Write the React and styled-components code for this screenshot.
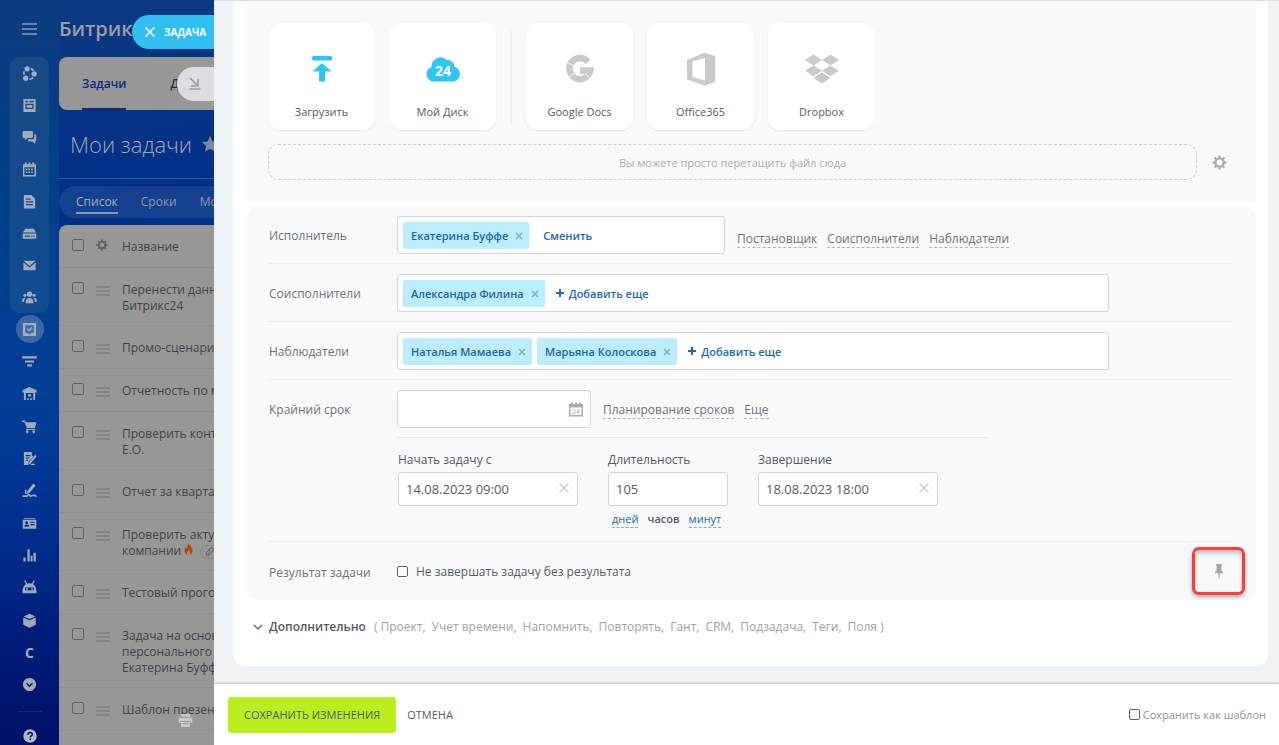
import React from "react";
import styled, { createGlobalStyle, css } from "styled-components";
import { FaDropbox } from "react-icons/fa";

const GlobalStyle = createGlobalStyle`
  * { box-sizing: border-box; }
  body {
    margin: 0;
    font-family: "Open Sans", "Noto Sans", sans-serif;
    font-size: 12px;
    color: #535c69;
  }
  button, input { font: inherit; color: inherit; }
  button { background: none; border: 0; padding: 0; cursor: pointer; }
  a { color: inherit; text-decoration: none; }
  h1 { margin: 0; }
  svg { flex: none; }
`;

const Layout = styled.div`
  display: flex;
  height: 100vh;
  overflow: hidden;
  background: linear-gradient(168deg, #0c3a80 0%, #00308a 22%, #003c90 45%, #003594 66%, #001f7e 84%, #000f66 100%);
`;

/* ---------- left menu ---------- */
const Sidebar = styled.nav`
  flex: 0 0 59px;
  display: flex;
  flex-direction: column;
  align-items: center;
  color: #a3abbb;
  background: linear-gradient(180deg, #0c3c80 0%, #00408c 34%, #003f97 54%, #003394 67%, #001f7d 84%, #000f68 100%);
`;
const Burger = styled.button`
  height: 57px;
  width: 39px;
  color: #8d9bb4;
  display: grid;
  place-items: center;
`;
const MenuGroup = styled.div`
  width: 39px;
  border-radius: 10px;
  background: rgba(130, 160, 170, 0.13);
`;
const MenuList = styled.div`
  flex: 1;
  display: flex;
  flex-direction: column;
  justify-content: space-between;
`;
const MenuItem = styled.a`
  display: grid;
  place-items: center;
  width: 39px;
  height: 32px;
  font-size: 14px;
  font-weight: 700;
`;
const ActiveDot = styled.span`
  display: grid;
  place-items: center;
  width: 28px;
  height: 28px;
  border-radius: 50%;
  background: #3a67a8;
`;
const MenuFooter = styled.div`
  flex: 0 0 44px;
  display: flex;
  flex-direction: column;
  align-items: center;
  justify-content: space-between;
  padding-top: 10px;
`;
const MenuLine = styled.span`
  width: 24px;
  height: 1px;
  background: rgba(255, 255, 255, 0.08);
`;

/* ---------- dimmed page under the slider ---------- */
const Page = styled.div`
  flex: 0 0 155px;
  position: relative;
  display: flex;
  flex-direction: column;
  overflow: hidden;
  white-space: nowrap;
  color: #999da3;
`;
const Brand = styled.div`
  height: 57px;
  line-height: 57px;
  font-size: 20px;
  font-weight: 600;
`;
const Tabs = styled.div`
  flex: 0 0 53px;
  display: flex;
  gap: 44px;
  padding: 0 23px;
  border-radius: 8px 0 0 8px;
  background: #979797;
`;
const Tab = styled.a`
  line-height: 53px;
  font-weight: 600;
  color: ${({ $active }) => ($active ? "#0b2a7a" : "#30343a")};
  box-shadow: ${({ $active }) => ($active ? "inset 0 -2px 0 #0b2a7a" : "none")};
`;
const TitleRow = styled.div`
  flex: 0 0 69px;
  display: flex;
  align-items: center;
  gap: 9px;
  padding-left: 11px;
  border-bottom: 1px solid #2b549a;
  h1 {
    font-size: 22px;
    font-weight: 300;
    color: #a2a6ad;
  }
`;
const Filters = styled.div`
  flex: 0 0 32px;
  display: flex;
  align-items: center;
  gap: 23px;
  margin: 7px 0;
  padding-left: 17px;
  border-radius: 16px 0 0 16px;
  background: rgba(120, 150, 170, 0.17);
`;
const Filter = styled.a`
  margin-top: 2px;
  line-height: 20px;
  color: ${({ $active }) => ($active ? "#a6abb3" : "#8b98ae")};
  border-bottom: 2px solid ${({ $active }) => ($active ? "#8b98ae" : "transparent")};
`;
const TaskTable = styled.table`
  width: 400px;
  border-spacing: 0;
  table-layout: fixed;
  border-radius: 8px 0 0 0;
  background: #979797;
  color: #3f444b;
  text-align: left;
  line-height: 16px;
  th, td {
    height: 43px;
    vertical-align: top;
    padding: 14px 0 11px;
    border-bottom: 1px solid #8e8f90;
    font-weight: 400;
  }
`;
const CheckCell = styled.td`
  width: 37px;
  padding-left: 13px !important;
`;
const HandleCell = styled.td`
  width: 26px;
`;
const Check = styled.input`
  appearance: none;
  display: block;
  flex: none;
  width: ${({ $size }) => $size || 12}px;
  height: ${({ $size }) => $size || 12}px;
  margin: 0;
  border: 1px solid #5c6067;
  border-radius: 2px;
  background: ${({ $white }) => ($white ? "#fff" : "transparent")};
`;
const Drag = styled.span`
  display: block;
  width: 14px;
  height: 10px;
  margin-top: 4px;
  background: repeating-linear-gradient(#818488 0 2px, transparent 2px 4px);
`;
const ClipBadge = styled.span`
  display: inline-flex;
  align-items: center;
  width: 40px;
  height: 14px;
  margin-left: 4px;
  padding-left: 4px;
  border: 1px solid #85878a;
  border-radius: 7px;
  vertical-align: middle;
`;
const SliderLabel = styled.button`
  position: absolute;
  right: 0;
  top: 15px;
  display: flex;
  align-items: center;
  gap: 8px;
  width: 82px;
  height: 34px;
  padding-left: 12px;
  border-radius: 17px 0 0 17px;
  background: #2fbff0;
  color: #fff;
  font-size: 10px;
  font-weight: 700;
`;
const SliderMinimize = styled.button`
  position: absolute;
  right: 0;
  top: 67px;
  width: 37px;
  height: 34px;
  padding: 3px 0 0 12px;
  border-radius: 17px 0 0 17px;
  background: #dadee2;
  text-align: left;
`;
const PrintButton = styled.button`
  position: absolute;
  left: 119px;
  bottom: 13px;
  color: #c9c9c9;
`;

/* ---------- slider ---------- */
const Slider = styled.main`
  flex: 1;
  min-width: 0;
  display: flex;
  flex-direction: column;
  background: #eef2f4;
`;
const Content = styled.div`
  flex: 1;
  min-height: 0;
  overflow: hidden;
  padding: 0 11px 0 19px;
  border-top: 1px solid #dcdfe3;
`;
const Card = styled.div`
  padding: 0 12px 30px 14px;
  border-radius: 0 0 12px 12px;
  background: #fff;
`;
const FilesSection = styled.section`
  padding: 22px 21px 21px;
  background: #f8f9fb;
`;
const FileCards = styled.div`
  display: flex;
  gap: 14px;
`;
const FileCard = styled.button`
  display: flex;
  flex-direction: column;
  align-items: center;
  width: 107px;
  height: 107px;
  border-radius: 12px;
  background: #fff;
  box-shadow: 0 1px 2px rgba(83, 92, 105, 0.12);
  font-size: 11px;
  color: #535c69;
  svg {
    margin: 29px 0 18px;
  }
`;
const CardsDivider = styled.span`
  width: 2px;
  margin: 8px 0 6px;
  background: #eceef1;
`;
const DropRow = styled.div`
  display: flex;
  align-items: center;
  gap: 15px;
  margin-top: 14px;
`;
const DropZone = styled.div`
  flex: 1;
  height: 36px;
  line-height: 36px;
  border: 1px dashed #ccd1d6;
  border-radius: 10px;
  text-align: center;
  font-size: 11px;
  color: #a8adb4;
`;
const GearButton = styled.button`
  display: grid;
  width: 15px;
  margin-right: 8px;
`;
const Options = styled.section`
  margin-top: 5px;
  padding: 0 23px 0 21px;
  border-radius: 10px;
  background: #f8f9fb;
`;
const Row = styled.div`
  display: flex;
  align-items: ${({ $top }) => ($top ? "flex-start" : "center")};
  padding: 10px 0 9px;
  border-bottom: ${({ $last }) => ($last ? "0" : "1px solid #eceff2")};
  min-height: 58px;
`;
const RowLabel = styled.span`
  flex: 0 0 129px;
  padding-left: 1px;
  line-height: 40px;
  margin-bottom: -2px;
  color: #6c737d;
`;
const boxStyle = css`
  border: 1px solid #d0d6dc;
  border-radius: 3px;
  background: #fff;
`;
const TokenField = styled.div`
  ${boxStyle}
  display: flex;
  align-items: center;
  gap: 5px;
  height: 38px;
  padding: 0 5px;
  flex: 0 1 ${({ $wide }) => ($wide ? "712px" : "328px")};
`;
const Token = styled.span`
  display: flex;
  align-items: center;
  gap: 7px;
  height: 27px;
  padding: 0 6px 0 8px;
  border-radius: 2px;
  background: #bcedfc;
  font-size: 11px;
  font-weight: 600;
  color: #2067b0;
`;
const TokenAction = styled.button`
  margin-left: ${({ $plain }) => ($plain ? "9px" : "6px")};
  display: flex;
  align-items: center;
  gap: 5px;
  font-size: 11px;
  font-weight: 600;
  color: #2067b0;
`;
const Links = styled.div`
  display: flex;
  gap: 10px;
  padding: ${({ $low }) => ($low ? "8px 0 0 12px" : "2px 0 0 12px")};
`;
const DashLink = styled.a`
  line-height: 17px;
  color: #6c737d;
  border-bottom: 1px dashed #b0b5bd;
`;
const DeadlineBody = styled.div`
  flex: 1;
`;
const DeadlineLine = styled.div`
  display: flex;
  align-items: center;
`;
const Control = styled.div`
  ${boxStyle}
  display: flex;
  align-items: center;
  width: ${({ $w }) => $w}px;
  height: ${({ $h }) => $h || 34}px;
  padding-right: 7px;
  input {
    flex: 1;
    min-width: 0;
    height: 100%;
    padding: 0 0 0 7px;
    border: 0;
    outline: 0;
    background: none;
    font-size: 13px;
  }
`;
const Plan = styled.div`
  display: flex;
  gap: 30px;
  max-width: 591px;
  margin: 9px 0 4px;
  padding: 14px 0 0 1px;
  border-top: 1px solid #e9ecef;
`;
const PlanField = styled.div`
  display: flex;
  flex-direction: column;
  > label:first-child {
    line-height: 16px;
    margin-bottom: 4px;
  }
`;
const Units = styled.div`
  display: flex;
  gap: 9px;
  padding: 5px 0 0 4px;
  font-size: 11px;
`;
const Unit = styled.button`
  line-height: 16px;
  font-weight: ${({ $active }) => ($active ? 600 : 400)};
  color: ${({ $active }) => ($active ? "#535c69" : "#2067b0")};
  border-bottom: 1px dashed ${({ $active }) => ($active ? "transparent" : "#7fa8d6")};
`;
const CheckLabel = styled.label`
  display: flex;
  align-items: center;
  gap: 8px;
`;
const PinButton = styled.button`
  display: grid;
  place-items: center;
  width: 53px;
  height: 48px;
  margin: -8px -12px -6px auto;
  border: 3px solid #f53f3f;
  border-radius: 7px;
  box-shadow: 0 2px 4px rgba(0, 0, 0, 0.35), inset 0 3px 4px rgba(0, 0, 0, 0.25);
`;
const More = styled.div`
  display: flex;
  align-items: center;
  gap: 8px;
  padding: 18px 0 0 6px;
  line-height: 18px;
`;
const MoreButton = styled.button`
  display: flex;
  align-items: center;
  gap: 6px;
  font-weight: 600;
`;
const MoreList = styled.span`
  display: flex;
  gap: 6px;
  color: #9da2aa;
`;
const Footer = styled.footer`
  flex: 0 0 61px;
  display: flex;
  align-items: center;
  gap: 11px;
  padding: 0 13px 0 14px;
  background: #fff;
  box-shadow: 0 -1px 2px rgba(0, 0, 0, 0.2);
  font-size: 11px;
`;
const SaveButton = styled.button`
  height: 36px;
  padding: 0 16px;
  border-radius: 3px;
  background: #bbed21;
  font-weight: 500;
`;
const CancelButton = styled.button`
  font-weight: 500;
`;
const TemplateLabel = styled.label`
  display: flex;
  align-items: center;
  gap: 3px;
  margin-left: auto;
  color: #8d939b;
`;

/* ---------- icons ---------- */
const Svg = ({ size = 15, children }) => (
  <svg width={size} height={size} viewBox="0 0 16 16" fill="currentColor" aria-hidden="true">
    {children}
  </svg>
);
const line = { fill: "none", stroke: "currentColor" };

const Cross = ({ size = 8, color = "#8db4c6", width = 2 }) => (
  <svg width={size} height={size} viewBox="0 0 8 8" aria-hidden="true">
    <path d="M1 1l6 6M7 1L1 7" fill="none" stroke={color} strokeWidth={width} />
  </svg>
);
const Gear = ({ size = 15, color = "#a8adb4" }) => (
  <svg width={size} height={size} viewBox="0 0 16 16" fill="none" stroke={color} aria-hidden="true">
    <circle cx="8" cy="8" r="4.4" strokeWidth="2.600" />
    <path d="M8 .5v3M8 12.500v3M.5 8h3M12.500 8h3M2.700 2.700l2 2M11.300 11.300l2 2M13.300 2.700l-2 2M4.700 11.300l-2 2" strokeWidth="2.400" />
  </svg>
);

const icons = {
  network: (
    <>
      <circle cx="5.500" cy="3" r="2.800" />
      <circle cx="13" cy="8.500" r="2.800" />
      <circle cx="4" cy="13" r="2.800" />
      <path {...line} strokeWidth="1.800" d="M9.500 2.800c1.300.4 2.200 1.100 2.900 2.200M12 12.500c-1 1-2.500 1.600-4.200 1.600M2.200 9.200c-.5-1.400-.3-2.400.3-3.500" />
    </>
  ),
  feed: <path fillRule="evenodd" d="M1.500 1h13v14h-13zM3.600 3v1.500h3V3zM8 3v1.500h4.400V3zM3.600 6.200v5.600h8.800V6.200zM5 7.500h6v3H5z" />,
  chat: <path d="M1.800 1h8.700a1.200 1.200 0 0 1 1.200 1.200v5a1.200 1.200 0 0 1-1.200 1.200H6L3 11V8.400H1.800A1.200 1.200 0 0 1 .6 7.200v-5A1.200 1.200 0 0 1 1.800 1zM13 4.500h1a1.200 1.200 0 0 1 1.200 1.200v5.200a1.200 1.200 0 0 1-1.200 1.200V15l-3-2.800H7.500a1.200 1.200 0 0 1-1.200-1.200v-1.200H12a1 1 0 0 0 1-1z" />,
  calendar: (
    <>
      <path fillRule="evenodd" d="M1 2.500h2V.5h2v2h2V.5h2v2h2V.5h2v2h2V15.500H1zM2.600 5.600v8.300h10.800V5.600z" />
      <path d="M6.800 7h1.800v1.800H6.800zM9.800 7h1.800v1.800H9.800zM4 10h1.800v1.800H4zM6.800 10h1.800v1.800H6.800zM9.800 10h1.800v1.800H9.800zM4 7h1.800v1.800H4z" />
    </>
  ),
  doc: <path fillRule="evenodd" d="M2 1h8l4 4v10.500H2zM4.200 6h5V4.700h-5zM4.200 9h7.600V7.700H4.200zM4.200 12h7.600V10.700H4.200z" />,
  drive: <path fillRule="evenodd" d="M3.600 3h8.800l2.600 4H1zM.8 8h14.400v5.500H.8zM3 10v1.500h5.500V10zM10 10v1.500h1.300V10zM12.200 10v1.500h1.300V10z" />,
  mail: <path d="M1.500 3h13L8 8.500zM1.500 4.800L8 10l6.500-5.200V13h-13z" />,
  people: (
    <>
      <circle cx="8" cy="4.400" r="2.800" />
      <path d="M3.800 14c0-3.400 1.400-5.400 4.200-5.400s4.200 2 4.200 5.400z" />
      <circle cx="3.200" cy="5.600" r="1.700" />
      <circle cx="12.800" cy="5.600" r="1.700" />
      <path d="M0 12.500c0-3 1.200-4.500 3.700-4.300-.9 1.200-1.400 2.600-1.400 4.300zM16 12.500c0-3-1.200-4.500-3.700-4.300.9 1.200 1.400 2.600 1.400 4.300z" />
    </>
  ),
  tasks: (
    <>
      <path fillRule="evenodd" d="M1 1h14v14H1zM3.500 3.500v8h2l2.500 1.500 2.500-1.500h2v-8z" />
      <path {...line} strokeWidth="1.600" d="M5.500 7.300l2 2 3.300-3.500" />
    </>
  ),
  filter: <path d="M.2 2.500h15.600v2.200H.2zM3.200 6.800h9.600V9H3.200zM5.500 11h5v2.400h-5z" />,
  store: <path fillRule="evenodd" d="M8 1l7.500 3.500V7H14v8H2V7H.5V4.500zM4 7.500V15h1.500v-2h1.800v2h1.400v-2h1.800v2H12V7.500zM6.500 8.800h3v2.400h-3z" />,
  cart: (
    <>
      <path d="M.3 1.500h2.800l.7 2h11.700l-1.800 6.200H5.300L2.400 3.200H.3z" />
      <path d="M4.200 10.500h10v1.200h-10z" />
      <circle cx="5.600" cy="13.600" r="1.500" />
      <circle cx="12.500" cy="13.600" r="1.500" />
    </>
  ),
  sign: (
    <>
      <path fillRule="evenodd" d="M2 1h8.500v3.500L12 6l-5 5.500V15H2zM4 5.500h5V4.300H4zM4 8h4V6.800H4zM4 10.500h2.500V9.300H4z" />
      <path d="M14 4l1.600 1.500-6.500 8-2.200.8.600-2.300zM10.500 13.500h3V15h-5z" />
    </>
  ),
  pen: (
    <>
      <path d="M12 .5L14.500 3 8 10.500l-3 .8.800-2.800zM3 8l1.800-1.500L4.500 10 8 11l-4.500 1z" />
      <path {...line} strokeWidth="1.700" d="M.5 14h4.200c1.500 0 1.300-1.400 2.500-1.400s1 1.400 2.300 1.400 1.300-1 2.500-1 1.300 1 3.500 1" />
    </>
  ),
  card: <path fillRule="evenodd" d="M2 2h12v1H2zM.8 4h14.400v9.500H.8zM5 5.600a1.600 1.600 0 1 0 .01 0zM2.500 11.500h5.200c0-1.600-1-2.400-2.600-2.400s-2.600.8-2.600 2.400zM9 6v1.300h4.500V6zM9 8.500v1.300h4.500V8.500z" />,
  bars: <path d="M1.500 10h2.400v4.500H1.500zM5.800 1.500h2.400v13H5.800zM9.200 8h2v6.500h-2zM12.300 5h2.400v9.500h-2.400z" />,
  robot: (
    <>
      <path {...line} strokeWidth="1.400" d="M3 .5l2 4M13 .5l-2 4" />
      <path fillRule="evenodd" d="M.5 14c0-7 2.500-10.500 7.500-10.500s7.500 3.500 7.500 10.500zM3.300 8v3h9.400V8z" />
      <circle cx="5.300" cy="9.500" r="1" />
      <circle cx="10.700" cy="9.500" r="1" />
    </>
  ),
  cube: <path d="M8 .8l6.200 2.800L8 6.300 1.800 3.600zM1.300 4.800L8 7.600l6.700-2.800v7.700L8 15.600l-6.700-3.100z" />,
  down: <path fillRule="evenodd" d="M8 1a7 7 0 1 0 .01 0zM4.300 7.300l1.100-1.100L8 8.700l2.600-2.500 1.100 1.100L8 11z" />,
};

const groupItems = ["network", "feed", "chat", "calendar", "doc", "drive", "mail", "people"];
const listItems = ["filter", "store", "cart", "sign", "pen", "card", "bars", "robot", "cube"];

const tasks = [
  ["Перенести данные в", "Битрикс24"],
  ["Промо-сценарий"],
  ["Отчетность по месяцам"],
  ["Проверить контракт", "Е.О."],
  ["Отчет за квартал"],
  ["Проверить актуальность", "компании"],
  ["Тестовый прогон"],
  ["Задача на основе", "персонального чата", "Екатерина Буффе"],
  ["Шаблон презентации"],
  [""],
];

const fields = ["( Проект,", "Учет времени,", "Напомнить,", "Повторять,", "Гант,", "CRM,", "Подзадача,", "Теги,", "Поля )"];

const FireAndClip = () => (
  <>
    {" "}
    <svg width="9" height="12" viewBox="0 0 9 12" aria-hidden="true">
      <path d="M4.500 0c.4 2.400 4 4 4 7.500C8.500 10 6.800 11.500 6 11.800 6.500 9.500 5.500 8 4.500 6.800 3.800 8 2.600 9.500 3.200 11.800 1.500 11.200.5 9.800.5 7.800.5 6.300 1.200 5 2 4.200c.2.800.5 1.200 1 1.500C3 3.500 4 1.500 4.500 0z" fill="#b4480d" />
    </svg>{" "}
    <ClipBadge>
      <svg width="9" height="10" viewBox="0 0 9 10" aria-hidden="true">
        <path d="M6 2.500L3 7a1 1 0 0 0 1.600 1L8 3.500a1.800 1.800 0 0 0-3-2.200L1.500 6a2.400 2.400 0 0 0 2 3.500" fill="none" stroke="#5f646b" />
      </svg>
    </ClipBadge>
  </>
);

const UserToken = ({ name }) => (
  <Token>
    {name}
    <button type="button" aria-label={"Удалить " + name}><Cross color="#7fb0c4" width={1.5} /></button>
  </Token>
);
const AddMore = () => (
  <TokenAction>
    <svg width="8" height="8" viewBox="0 0 8 8" aria-hidden="true"><path d="M4 0v8M0 4h8" stroke="#2067b0" strokeWidth="2" /></svg>
    Добавить еще
  </TokenAction>
);

const LeftMenu = () => (
  <Sidebar>
    <Burger aria-label="Меню">
      <svg width="15" height="12" viewBox="0 0 15 12" aria-hidden="true"><path d="M0 1h15M0 6h15M0 11h15" stroke="currentColor" strokeWidth="1.500" /></svg>
    </Burger>
    <MenuGroup>
      {groupItems.map((name) => (
        <MenuItem href="#" key={name} aria-label={name}><Svg>{icons[name]}</Svg></MenuItem>
      ))}
    </MenuGroup>
    <MenuList>
      <MenuItem href="#" aria-label="tasks"><ActiveDot><Svg>{icons.tasks}</Svg></ActiveDot></MenuItem>
      {listItems.map((name) => (
        <MenuItem href="#" key={name} aria-label={name}><Svg>{icons[name]}</Svg></MenuItem>
      ))}
      <MenuItem href="#">С</MenuItem>
      <MenuItem href="#" aria-label="more"><Svg>{icons.down}</Svg></MenuItem>
    </MenuList>
    <MenuFooter>
      <MenuLine />
      <svg width="14" height="16" viewBox="0 0 14 16" aria-hidden="true">
        <circle cx="7" cy="7" r="6.700" fill="#b3b8c6" />
        <path d="M4.800 5.700c0-1.400 1-2.200 2.300-2.200s2.200.8 2.200 1.900c0 1.500-2.100 1.600-2.100 3.100M7.200 9.500v1.600" fill="none" stroke="#00126c" strokeWidth="1.500" />
      </svg>
    </MenuFooter>
  </Sidebar>
);

const TasksPage = () => (
  <Page>
    <Brand>Битрикс24</Brand>
    <Tabs>
      <Tab href="#" $active>Задачи</Tab>
      <Tab href="#">Документы</Tab>
    </Tabs>
    <TitleRow>
      <h1>Мои задачи</h1>
      <svg width="18" height="18" viewBox="0 0 18 18" aria-hidden="true"><path d="M9 1l2.400 5.400 5.800.6-4.300 3.900 1.200 5.800L9 13.700l-5.100 3 1.200-5.800L.8 7l5.800-.6z" fill="#7d8796" /></svg>
    </TitleRow>
    <Filters>
      <Filter href="#" $active>Список</Filter>
      <Filter href="#">Сроки</Filter>
      <Filter href="#">Мой план</Filter>
    </Filters>
    <TaskTable>
      <thead>
        <tr>
          <CheckCell as="th"><Check type="checkbox" aria-label="Выбрать все" /></CheckCell>
          <HandleCell as="th"><Gear size={12} color="#5f646b" /></HandleCell>
          <th>Название</th>
        </tr>
      </thead>
      <tbody>
        {tasks.map((lines, i) => (
          <tr key={i}>
            <CheckCell><Check type="checkbox" aria-label={lines[0] || "Задача"} /></CheckCell>
            <HandleCell><Drag /></HandleCell>
            <td>
              {lines.map((text) => (
                <div key={text}>
                  {text}
                  {text === "компании" && <FireAndClip />}
                </div>
              ))}
            </td>
          </tr>
        ))}
      </tbody>
    </TaskTable>
    <SliderLabel><Cross size={12} color="#fff" width={1} />ЗАДАЧА</SliderLabel>
    <SliderMinimize aria-label="Свернуть">
      <svg width="12" height="13" viewBox="0 0 12 13" fill="none" stroke="#9a9ea4" strokeWidth="1.600" aria-hidden="true"><path d="M1 1l7.500 7.500M9 2v7H2M.5 12h11" /></svg>
    </SliderMinimize>
    <PrintButton aria-label="Печать">
      <Svg><path fillRule="evenodd" d="M3.500 1h9l.7 3H2.800zM.8 5h14.400v5.500h-2V8.500H2.800v2h-2zM3.200 9.500h9.600V15H3.200zM4.800 11v1h6.400v-1z" /></Svg>
    </PrintButton>
  </Page>
);

const Files = () => (
  <FilesSection>
    <FileCards>
      <FileCard>
        <svg width="34" height="34" viewBox="0 0 34 34" fill="#2fc6f6" aria-hidden="true"><rect x="7" y="4" width="20" height="4.500" rx="1.500" /><path d="M17 11l9.500 8.500H20V29.500h-6V19.500H7.500z" /></svg>
        Загрузить
      </FileCard>
      <FileCard>
        <svg width="36" height="34" viewBox="0 0 36 34" fill="#2fc6f6" aria-hidden="true">
          <path d="M8.500 29.500a7.500 7.500 0 0 1-2-14.600 9 9 0 0 1 15.400-6.800 6.500 6.500 0 0 1 7.600 6.700 7.500 7.500 0 0 1-1.500 14.700z" />
          <text x="18" y="24" textAnchor="middle" fontSize="14" fontWeight="700" fill="#fff">24</text>
        </svg>
        Мой Диск
      </FileCard>
      <CardsDivider />
      <FileCard>
        <svg width="34" height="34" viewBox="0 0 34 34" fill="none" aria-hidden="true">
          <path d="M25 9.800A10.500 10.500 0 1 0 27.300 18.500H17" stroke="#c8cbce" strokeWidth="6.500" />
          <path d="M4 10l8 4.500M5 26l7-5.500M27 26l-5-4" stroke="#fff" strokeWidth="1" />
        </svg>
        Google Docs
      </FileCard>
      <FileCard>
        <svg width="34" height="34" viewBox="0 0 34 34" fill="#c8cacc" aria-hidden="true">
          <path fillRule="evenodd" d="M3 8L20.500.800 31 4v26L20.500 33.500 3 27.500zM8.500 9.500V25L21 28.800V6z" />
        </svg>
        Office365
      </FileCard>
      <FileCard>
        <FaDropbox size={34} color="#c8cacc" />
        Dropbox
      </FileCard>
    </FileCards>
    <DropRow>
      <DropZone>Вы можете просто перетащить файл сюда</DropZone>
      <GearButton aria-label="Настройки"><Gear /></GearButton>
    </DropRow>
  </FilesSection>
);

const DateField = ({ id, label, value }) => (
  <PlanField>
    <label htmlFor={id}>{label}</label>
    <Control $w={180}>
      <input id={id} defaultValue={value} />
      <button type="button" aria-label="Очистить"><Cross size={12} color="#cdd0d4" width={1} /></button>
    </Control>
  </PlanField>
);

export default function App() {
  return (
    <>
      <GlobalStyle />
      <Layout>
        <LeftMenu />
        <TasksPage />
        <Slider>
          <Content>
            <Card>
              <Files />
              <Options>
                <Row>
                  <RowLabel>Исполнитель</RowLabel>
                  <TokenField>
                    <UserToken name="Екатерина Буффе" />
                    <TokenAction $plain>Сменить</TokenAction>
                  </TokenField>
                  <Links $low>
                    <DashLink href="#">Постановщик</DashLink>
                    <DashLink href="#">Соисполнители</DashLink>
                    <DashLink href="#">Наблюдатели</DashLink>
                  </Links>
                </Row>
                <Row>
                  <RowLabel>Соисполнители</RowLabel>
                  <TokenField $wide>
                    <UserToken name="Александра Филина" />
                    <AddMore />
                  </TokenField>
                </Row>
                <Row>
                  <RowLabel>Наблюдатели</RowLabel>
                  <TokenField $wide>
                    <UserToken name="Наталья Мамаева" />
                    <UserToken name="Марьяна Колоскова" />
                    <AddMore />
                  </TokenField>
                </Row>
                <Row $top>
                  <RowLabel as="label" htmlFor="deadline">Крайний срок</RowLabel>
                  <DeadlineBody>
                    <DeadlineLine>
                      <Control $w={194} $h={38}>
                        <input id="deadline" />
                        <svg width="14" height="15" viewBox="0 0 14 15" aria-hidden="true">
                          <path fillRule="evenodd" d="M0 2h2V.5h2V2h2V.5h2V2h2V.5h2V2h2v12.500H0zM1.500 5.500V13h11V5.500z" fill="#a8adb4" />
                          <text x="7" y="12" textAnchor="middle" fontSize="7" fill="#a8adb4">24</text>
                        </svg>
                      </Control>
                      <Links>
                        <DashLink href="#">Планирование сроков</DashLink>
                        <DashLink href="#">Еще</DashLink>
                      </Links>
                    </DeadlineLine>
                    <Plan>
                      <DateField id="start" label="Начать задачу с" value="14.08.2023 09:00" />
                      <PlanField>
                        <label htmlFor="duration">Длительность</label>
                        <Control $w={120}><input id="duration" defaultValue="105" /></Control>
                        <Units>
                          <Unit>дней</Unit>
                          <Unit $active>часов</Unit>
                          <Unit>минут</Unit>
                        </Units>
                      </PlanField>
                      <DateField id="end" label="Завершение" value="18.08.2023 18:00" />
                    </Plan>
                  </DeadlineBody>
                </Row>
                <Row $last>
                  <RowLabel>Результат задачи</RowLabel>
                  <CheckLabel>
                    <Check type="checkbox" $size={11} $white />
                    Не завершать задачу без результата
                  </CheckLabel>
                  <PinButton aria-label="Закрепить">
                    <svg width="10" height="16" viewBox="0 0 10 16" fill="#a0a3a8" aria-hidden="true"><path d="M2.200 1h5.600v1.500l-.6.500.3 4.500L9 9v1.200H1V9l1.500-1.500.3-4.500-.6-.5zM4.200 10.200h1.600L5.300 15.500h-.6z" /></svg>
                  </PinButton>
                </Row>
              </Options>
              <More>
                <MoreButton>
                  <svg width="10" height="7" viewBox="0 0 10 7" fill="none" stroke="#80868e" strokeWidth="1.800" aria-hidden="true"><path d="M1 1l4 4 4-4" /></svg>
                  Дополнительно
                </MoreButton>
                <MoreList>{fields.map((name) => <a href="#" key={name}>{name}</a>)}</MoreList>
              </More>
            </Card>
          </Content>
          <Footer>
            <SaveButton>СОХРАНИТЬ ИЗМЕНЕНИЯ</SaveButton>
            <CancelButton>ОТМЕНА</CancelButton>
            <TemplateLabel>
              <Check type="checkbox" $size={11} $white />
              Сохранить как шаблон
            </TemplateLabel>
          </Footer>
        </Slider>
      </Layout>
    </>
  );
}
